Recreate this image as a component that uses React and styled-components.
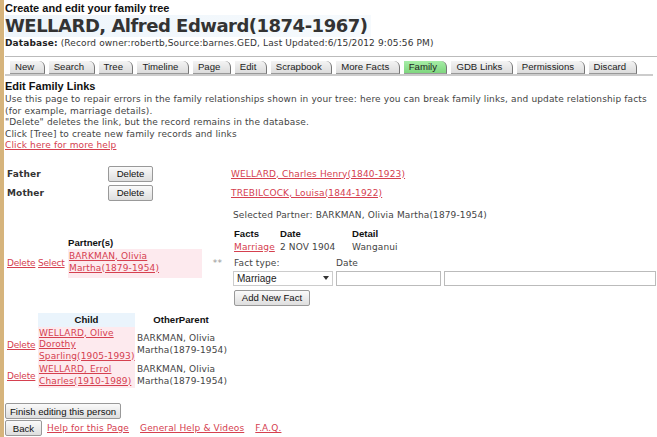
import React from "react";
import styled, { createGlobalStyle } from "styled-components";

const GlobalStyle = createGlobalStyle`
    html, body {
        margin: 0;
        padding: 0;
        background: #fff;
    }
    body {
        font-family: "DejaVu Sans", Verdana, sans-serif;
        font-size: 9px;
        letter-spacing: 0.13px;
        color: #444;
    }
`;

const Page = styled.div`
    min-height: 437px;
    border-left: 4px solid #d6b47c;
    padding: 2px 0 0 1px;
    box-sizing: border-box;
`;

const TopTitle = styled.div`
    font-family: "Liberation Sans", Arial, sans-serif;
    font-weight: bold;
    font-size: 11px;
    letter-spacing: 0;
    color: #111;
    line-height: 13px;
`;

const PersonName = styled.h1`
    margin: 0;
    display: inline-block;
    font-family: "DejaVu Sans", Verdana, sans-serif;
    font-size: 18px;
    letter-spacing: -0.5px;
    font-weight: bold;
    color: #333;
    line-height: 22px;
    padding-right: 4px;
    background: linear-gradient(90deg, #eef5fb, #f6fafd);
`;

const DbLine = styled.div`
    line-height: 12px;
    color: #333;
    b {
        color: #222;
    }
`;

const Rule = styled.div`
    height: 1px;
    background: #bbb;
    margin: 7px 0 0 0;
`;

const TabBar = styled.div`
    display: flex;
    gap: 4px;
    padding: 4px 0 0 5px;
    border-bottom: 2px solid #ccc;
    margin-right: 4px;
`;

const Tab = styled.div`
    font-family: "Liberation Sans", Arial, sans-serif;
    font-size: 9.6px;
    letter-spacing: 0;
    color: #222;
    height: 12px;
    line-height: 12px;
    padding: 0 9.5px 0 5px;
    background: ${(p) =>
        p.$active
            ? "linear-gradient(#a6eda6, #7fd67f)"
            : "linear-gradient(#f4f4f4, #dcdcdc)"};
    border-right: 1px solid #777;
    border-top-right-radius: 6px;
    border-bottom: 1px solid #999;
`;

const SectionTitle = styled.div`
    font-family: "Liberation Sans", Arial, sans-serif;
    font-weight: bold;
    font-size: 11px;
    letter-spacing: 0;
    color: #111;
    margin-top: 3px;
    line-height: 14px;
`;

const Intro = styled.p`
    margin: 1px 0 0 0;
    line-height: 11.5px;
    color: #444;
`;

const Link = styled.a`
    color: #d5404f;
    text-decoration: underline;
    cursor: pointer;
`;

const RowLink = styled(Link)`
    letter-spacing: -0.2px;
`;

const ParentGrid = styled.div`
    display: grid;
    grid-template-columns: 101px 123px auto;
    row-gap: 3px;
    align-items: center;
    margin-top: 14px;
    padding-left: 2px;
`;

const Label = styled.div`
    font-weight: bold;
    color: #333;
`;

const Button = styled.button`
    font-family: "Liberation Sans", Arial, sans-serif;
    font-size: 9.6px;
    letter-spacing: 0;
    color: #111;
    padding: 0 4px;
    white-space: nowrap;
    height: ${(p) => p.$h || 16}px;
    width: ${(p) => (p.$w ? p.$w + "px" : "auto")};
    border: 1px solid #999;
    border-radius: 2px;
    background: linear-gradient(#fafafa, #dedede);
    box-sizing: border-box;
`;

const PartnerArea = styled.div`
    display: flex;
    align-items: flex-start;
    margin-top: 8px;
`;

const PartnerTable = styled.div`
    display: grid;
    grid-template-columns: 31px 30px 134px 31px;
    align-items: center;
    margin-top: 28px;
    padding-left: 2px;
`;

const HeadCell = styled.div`
    font-family: "Liberation Sans", Arial, sans-serif;
    font-weight: bold;
    font-size: 9.6px;
    letter-spacing: 0;
    color: #111;
    text-align: ${(p) => p.$align || "left"};
    background: ${(p) => p.$bg || "transparent"};
    line-height: 12px;
    padding: ${(p) => p.$pad || "0"};
`;

const NameCell = styled.div`
    background: #fdeaee;
    line-height: ${(p) => p.$lh || 11.5}px;
    padding: ${(p) => p.$pad || "0 2px 0 1px"};
    align-self: stretch;
    display: flex;
    align-items: center;
    white-space: nowrap;
`;

const Stars = styled.div`
    color: #999;
    text-align: center;
`;

const FactsPanel = styled.div`
    display: flex;
    flex-direction: column;
`;

const SelectedLine = styled.div`
    line-height: 12px;
`;

const FactsGrid = styled.div`
    display: grid;
    grid-template-columns: 46px 72px auto;
    row-gap: 2px;
    margin-top: 7px;
    padding-left: 1px;
    line-height: 13px;
`;

const FactHead = styled.div`
    font-family: "Liberation Sans", Arial, sans-serif;
    font-weight: bold;
    font-size: 9.6px;
    letter-spacing: 0;
    color: #111;
    line-height: 11px;
`;

const FormLabels = styled.div`
    display: grid;
    grid-template-columns: 102px auto;
    padding-left: 1px;
    line-height: 12px;
    margin-top: 3px;
`;

const InputRow = styled.div`
    display: flex;
    gap: 3px;
    margin-top: 2px;
`;

const Select = styled.div`
    width: 100px;
    height: 15px;
    box-sizing: border-box;
    border: 1px solid #ccc;
    font-family: "Liberation Sans", Arial, sans-serif;
    font-size: 10px;
    letter-spacing: 0;
    color: #222;
    display: flex;
    align-items: center;
    justify-content: space-between;
    padding: 0 3px;
    &::after {
        content: "";
        border-left: 3px solid transparent;
        border-right: 3px solid transparent;
        border-top: 4px solid #333;
    }
`;

const TextInput = styled.div`
    width: ${(p) => p.$w}px;
    height: 15px;
    box-sizing: border-box;
    border: 1px solid #bbb;
    background: #fff;
`;

const AddRow = styled.div`
    margin-top: 4px;
    padding-left: 1px;
`;

const ChildTable = styled.div`
    display: grid;
    grid-template-columns: 31px 97px max-content;
    justify-content: start;
    margin-top: 7px;
    padding-left: 2px;
`;

const ChildDelete = styled.div`
    display: flex;
    align-items: center;
`;

const OtherParent = styled.div`
    line-height: 11.5px;
    display: flex;
    align-items: center;
    padding: 0 0 0 2px;
`;

const Footer = styled.div`
    display: flex;
    flex-direction: column;
    gap: 1px;
    margin-top: 15px;
`;

const FooterRow = styled.div`
    display: flex;
    align-items: center;
    gap: 5px;
`;

const HelpLinks = styled.div`
    display: flex;
    gap: 11px;
`;

const tabs = [
    "New",
    "Search",
    "Tree",
    "Timeline",
    "Page",
    "Edit",
    "Scrapbook",
    "More Facts",
    "Family",
    "GDB Links",
    "Permissions",
    "Discard",
];

const children = [
    { name: ["WELLARD, Olive", "Dorothy", "Sparling(1905-1993)"], other: ["BARKMAN, Olivia", "Martha(1879-1954)"] },
    { name: ["WELLARD, Errol", "Charles(1910-1989)"], other: ["BARKMAN, Olivia", "Martha(1879-1954)"] },
];

function App() {
    return (
        <>
            <GlobalStyle />
            <Page>
                <TopTitle>Create and edit your family tree</TopTitle>
                <PersonName>WELLARD, Alfred Edward(1874-1967)</PersonName>
                <DbLine>
                    <b>Database:</b> (Record owner:robertb,Source:barnes.GED, Last Updated:6/15/2012 9:05:56 PM)
                </DbLine>
                <Rule />
                <TabBar>
                    {tabs.map((t) => (
                        <Tab key={t} $active={t === "Family"}>
                            {t}
                        </Tab>
                    ))}
                </TabBar>
                <SectionTitle>Edit Family Links</SectionTitle>
                <Intro>
                    Use this page to repair errors in the family relationships shown in your tree: here you can break family links, and update relationship facts (for example, marriage details).
                    <br />
                    "Delete" deletes the link, but the record remains in the database.
                    <br />
                    Click [Tree] to create new family records and links
                    <br />
                    <Link>Click here for more help</Link>
                </Intro>

                <ParentGrid>
                    <Label>Father</Label>
                    <Button $w={45}>Delete</Button>
                    <Link>WELLARD, Charles Henry(1840-1923)</Link>
                    <Label>Mother</Label>
                    <Button $w={45}>Delete</Button>
                    <Link>TREBILCOCK, Louisa(1844-1922)</Link>
                </ParentGrid>

                <PartnerArea>
                    <PartnerTable>
                        <div />
                        <div />
                        <HeadCell>Partner(s)</HeadCell>
                        <div />
                        <RowLink>Delete</RowLink>
                        <RowLink>Select</RowLink>
                        <NameCell $pad="1px 2px 4px 1px" $lh={12}>
                            <Link>
                                BARKMAN, Olivia
                                <br />
                                Martha(1879-1954)
                            </Link>
                        </NameCell>
                        <Stars>**</Stars>
                    </PartnerTable>
                    <FactsPanel>
                        <SelectedLine>Selected Partner: BARKMAN, Olivia Martha(1879-1954)</SelectedLine>
                        <FactsGrid>
                            <FactHead>Facts</FactHead>
                            <FactHead>Date</FactHead>
                            <FactHead>Detail</FactHead>
                            <Link>Marriage</Link>
                            <div>2 NOV 1904</div>
                            <div>Wanganui</div>
                        </FactsGrid>
                        <FormLabels>
                            <span>Fact type:</span>
                            <span>Date</span>
                        </FormLabels>
                        <InputRow>
                            <Select>Marriage</Select>
                            <TextInput $w={105} />
                            <TextInput $w={212} />
                        </InputRow>
                        <AddRow>
                            <Button $w={76}>Add New Fact</Button>
                        </AddRow>
                    </FactsPanel>
                </PartnerArea>

                <ChildTable>
                    <div />
                    <HeadCell $align="center" $bg="#eaf4fc" $pad="1px 0 1px 0">
                        Child
                    </HeadCell>
                    <HeadCell $align="center" $pad="1px 0 1px 0">
                        OtherParent
                    </HeadCell>
                    {children.map((c, i) => (
                        <React.Fragment key={i}>
                            <ChildDelete>
                                <RowLink>Delete</RowLink>
                            </ChildDelete>
                            <NameCell $pad="1px 0 1px 1px">
                                <Link>
                                    {c.name.map((n, j) => (
                                        <React.Fragment key={j}>
                                            {j > 0 && <br />}
                                            {n}
                                        </React.Fragment>
                                    ))}
                                </Link>
                            </NameCell>
                            <OtherParent>
                                {c.other[0]}
                                <br />
                                {c.other[1]}
                            </OtherParent>
                        </React.Fragment>
                    ))}
                </ChildTable>

                <Footer>
                    <div>
                        <Button $w={116}>Finish editing this person</Button>
                    </div>
                    <FooterRow>
                        <Button $w={37}>Back</Button>
                        <HelpLinks>
                            <Link>Help for this Page</Link>
                            <Link>General Help &amp; Videos</Link>
                            <Link>F.A.Q.</Link>
                        </HelpLinks>
                    </FooterRow>
                </Footer>
            </Page>
        </>
    );
}

export default App;
